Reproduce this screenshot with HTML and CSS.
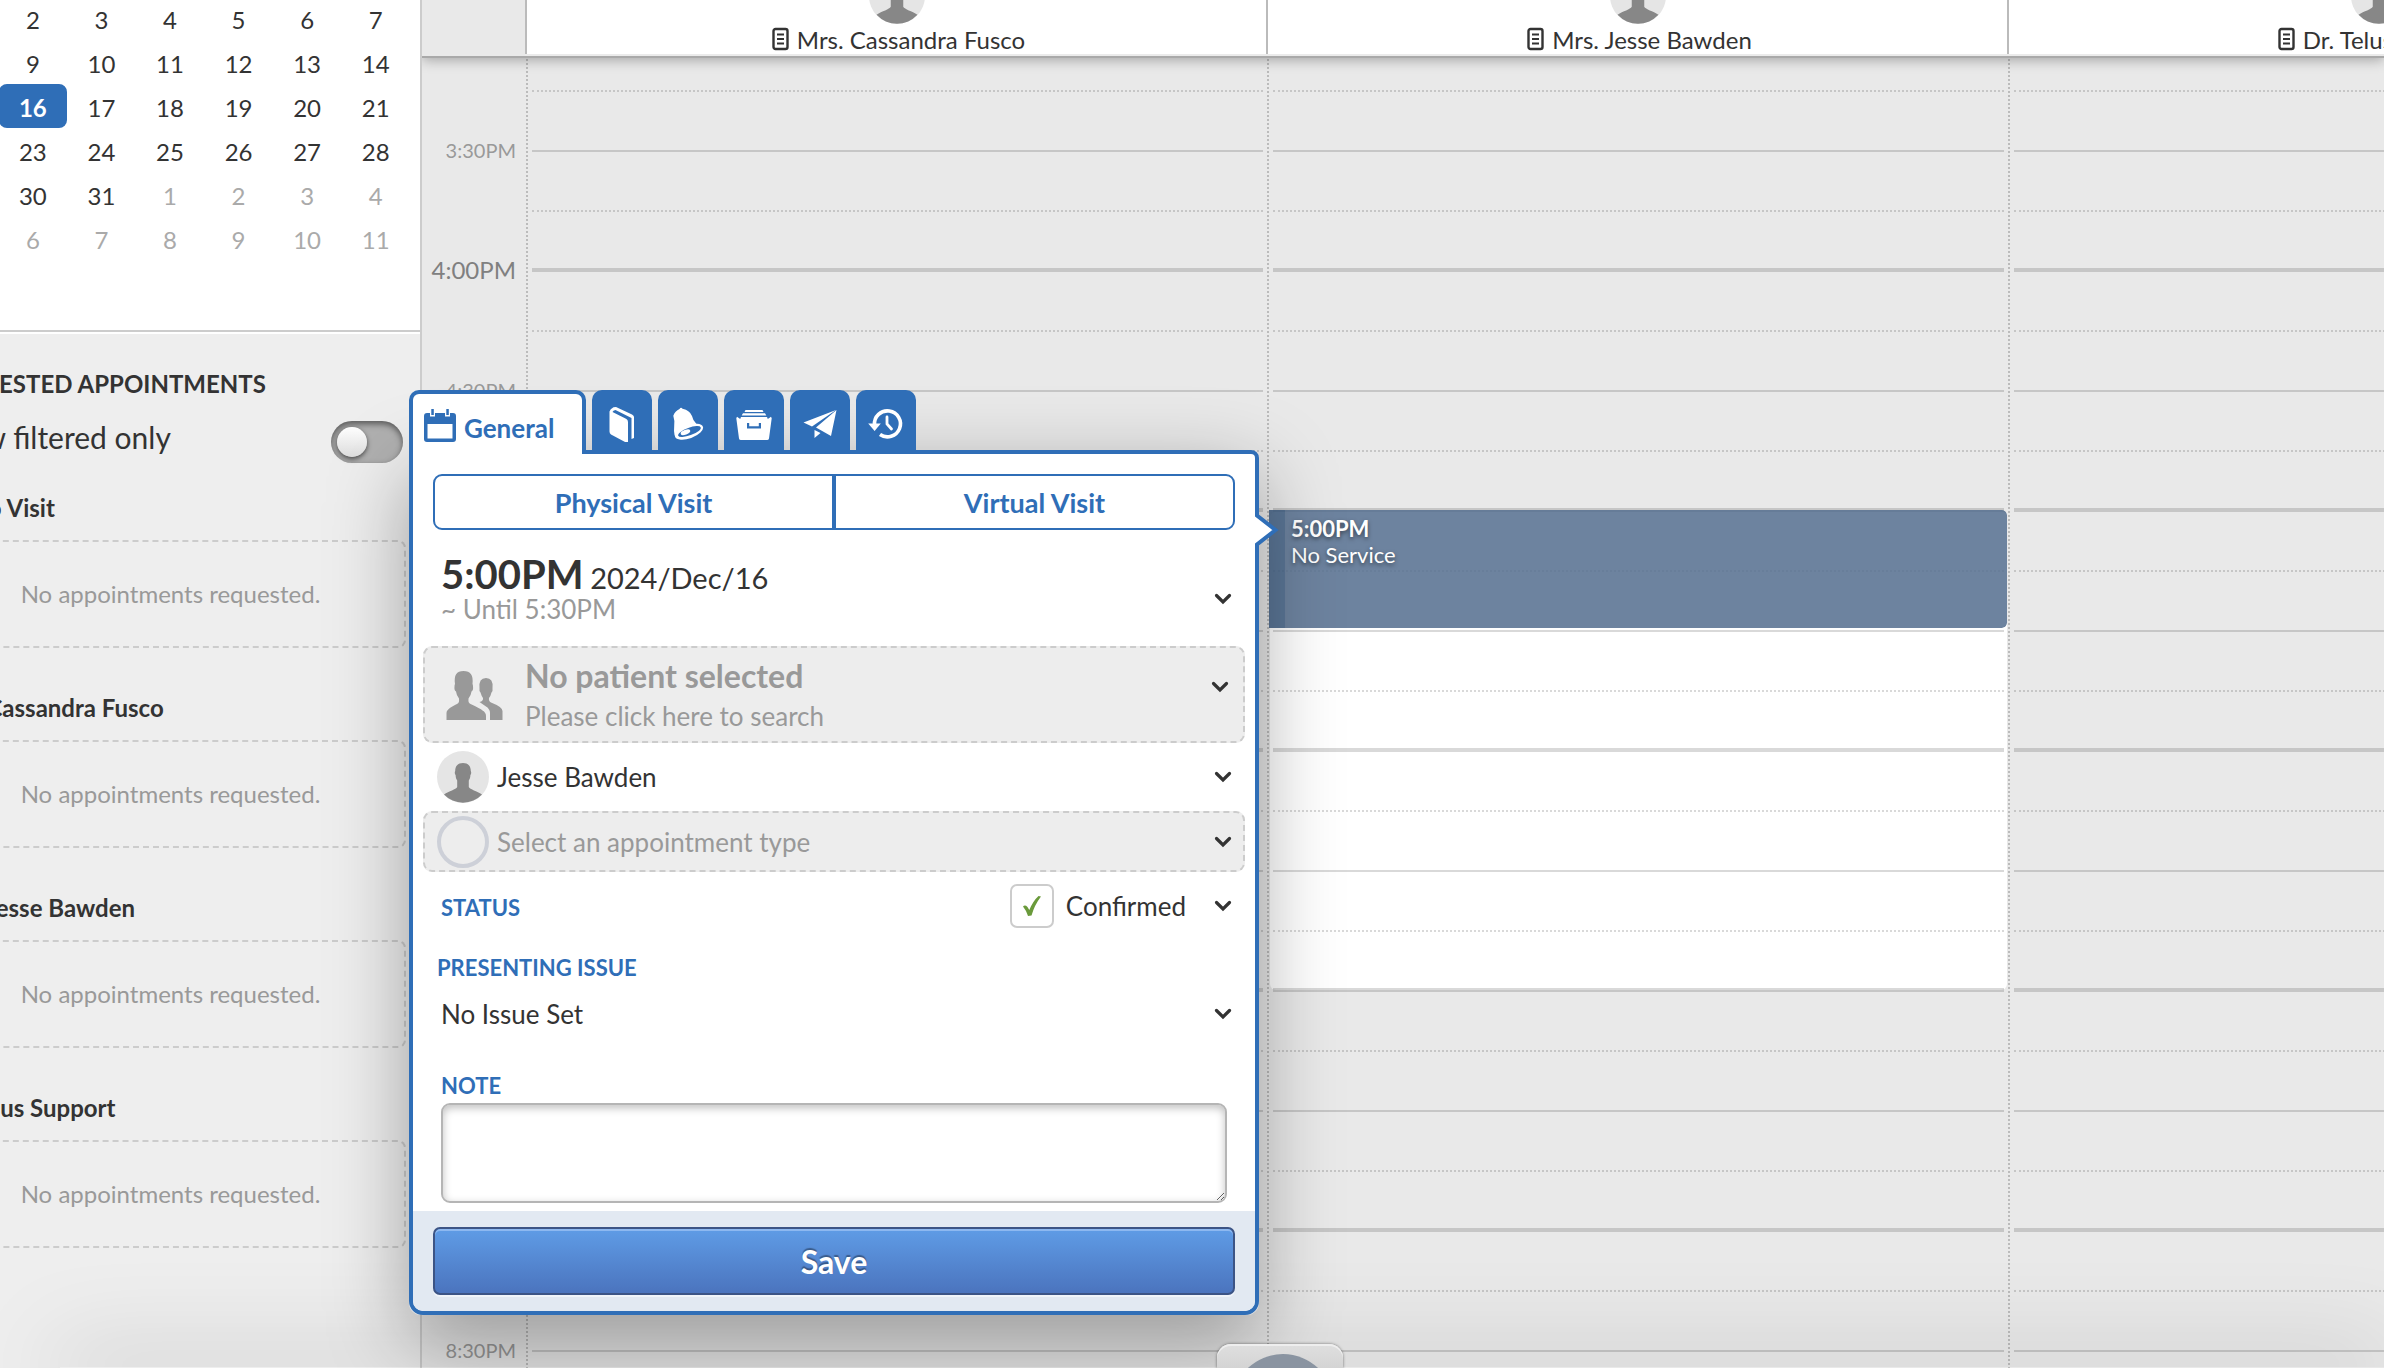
FILE: index.html
```html
<!DOCTYPE html>
<html lang="en">
<head>
<meta charset="utf-8">
<title>Schedule</title>
<link rel="stylesheet" href="styles.css">
</head>
<body>
<svg class="defs" aria-hidden="true">
  <symbol id="avatar" viewBox="0 0 52 52"><circle cx="26" cy="26" r="26" fill="#e5e5e5"/><path d="M7 43.500c5-3.500 12-5 13.200-7.500v-6.500c-1-1.500-1.500-3-1.600-5.500-1-1-1-3-.4-4 0-5 2.500-8 7.800-8s7.800 3 7.800 8c.6 1 .6 3-.4 4-.1 2.500-.6 4-1.600 5.500v6.500c1.200 2.500 8.200 4 13.200 7.500a26 26 0 0 1-38 0z" fill="#878787"/></symbol>
  <symbol id="doc" viewBox="0 0 18 26"><rect x="1.500" y="2" width="14" height="20" rx="2" fill="none" stroke="#333" stroke-width="2.400"/><path d="M5 7.500h7M5 12h7M5 16.500h7" stroke="#333" stroke-width="2"/></symbol>
  <symbol id="chev" viewBox="0 0 18 12"><path d="M2.500 2.500l6.500 6.500 6.500-6.500" fill="none" stroke="#333" stroke-width="3.200" stroke-linecap="round"/></symbol>
</svg>
<div class="app">
  <aside class="sidebar">
    <table class="month">
      <tbody>
        <tr><td>1</td><td>2</td><td>3</td><td>4</td><td>5</td><td>6</td><td>7</td></tr>
        <tr><td>8</td><td>9</td><td>10</td><td>11</td><td>12</td><td>13</td><td>14</td></tr>
        <tr><td>15</td><td class="today">16</td><td>17</td><td>18</td><td>19</td><td>20</td><td>21</td></tr>
        <tr><td>22</td><td>23</td><td>24</td><td>25</td><td>26</td><td>27</td><td>28</td></tr>
        <tr><td>29</td><td>30</td><td>31</td><td class="out">1</td><td class="out">2</td><td class="out">3</td><td class="out">4</td></tr>
        <tr><td class="out">5</td><td class="out">6</td><td class="out">7</td><td class="out">8</td><td class="out">9</td><td class="out">10</td><td class="out">11</td></tr>
      </tbody>
    </table>
    <section class="requests">
      <h2>REQUESTED APPOINTMENTS</h2>
      <label class="filter"><span>Show filtered only</span><input type="checkbox" class="toggle"></label>
      <h3>Studio Visit</h3>
      <p>No appointments requested.</p>
      <h3>Mrs. Cassandra Fusco</h3>
      <p>No appointments requested.</p>
      <h3>Mrs. Jesse Bawden</h3>
      <p>No appointments requested.</p>
      <h3>Dr. Telus Support</h3>
      <p>No appointments requested.</p>
    </section>
  </aside>

  <main class="schedule">
    <header class="people">
      <div class="corner"></div>
      <div class="person"><svg class="face"><use href="#avatar"/></svg><span><svg class="doc"><use href="#doc"/></svg>Mrs. Cassandra Fusco</span></div>
      <div class="person"><svg class="face"><use href="#avatar"/></svg><span><svg class="doc"><use href="#doc"/></svg>Mrs. Jesse Bawden</span></div>
      <div class="person"><svg class="face"><use href="#avatar"/></svg><span><svg class="doc"><use href="#doc"/></svg>Dr. Telus Support</span></div>
    </header>
    <div class="grid">
      <div class="times">
        <time>3:30PM</time><time class="hour">4:00PM</time><time>4:30PM</time><time class="hour">5:00PM</time><time>5:30PM</time><time class="hour">6:00PM</time><time>6:30PM</time><time class="hour">7:00PM</time><time>7:30PM</time><time class="hour">8:00PM</time><time>8:30PM</time>
      </div>
      <div class="lane">
        <i></i><i></i><i></i><i></i><i></i><i></i><i></i><i></i><i></i><i></i><i></i><i></i><i></i><i></i><i></i><i></i><i></i><i></i><i></i><i></i><i></i><i></i><i></i>
      </div>
      <div class="lane">
        <div class="open"></div>
        <i></i><i></i><i></i><i></i><i></i><i></i><i></i><i></i><i></i><i></i><i></i><i></i><i></i><i></i><i></i><i></i><i></i><i></i><i></i><i></i><i></i><i></i><i></i>
        <div class="booking"><b>5:00PM</b><span>No Service</span></div>
      </div>
      <div class="lane">
        <i></i><i></i><i></i><i></i><i></i><i></i><i></i><i></i><i></i><i></i><i></i><i></i><i></i><i></i><i></i><i></i><i></i><i></i><i></i><i></i><i></i><i></i><i></i>
      </div>
    </div>
  </main>
</div>
<div class="bottom-shade"></div>

<form class="popup">
  <nav class="tabs">
    <button type="button" class="tab active">
      <svg width="32" height="34" viewBox="0 0 32 34"><path fill="#2f6eb7" fill-rule="evenodd" d="M3 4h3v3.500h5V4h10v3.500h5V4h3a3 3 0 0 1 3 3v23a3 3 0 0 1-3 3H3a3 3 0 0 1-3-3V7a3 3 0 0 1 3-3zM3.500 15v14.500h25V15z"/><path fill="#2f6eb7" d="M7.300 0h2.500v6H7.300zM22.300 0h2.500v6h-2.500z"/></svg>General
    </button>
    <button type="button" class="tab" aria-label="Chart"><svg width="36" height="36" viewBox="0 0 36 36"><path fill="#fff" fill-rule="evenodd" d="M5.500 5.500Q6 3 9.500 1.200L12 1 28 8.500Q30 9.500 30 11v21l-2.500 1V12L11.500 4Q9 4.500 8.500 6l13.500 6.700Q24 13.700 24 16v20l-2 .5L7 28.500q-1.500-.8-1.500-3z"/></svg></button>
    <button type="button" class="tab" aria-label="Reminders"><svg width="36" height="36" viewBox="0 0 36 36"><path fill="#fff" d="M9.500 3Q11 .8 12.500 2.800 20 4.500 22 10 22.800 14.500 26.500 18L28 20 10 28 4.600 29.500 Q3.600 26 4.200 20 5 15 3.300 9.700 5 5 9.500 3z"/><g transform="rotate(-20 19 25.700)"><ellipse cx="19" cy="25.700" rx="14.800" ry="6.600" fill="#fff"/><ellipse cx="19.500" cy="25.700" rx="12" ry="3.800" fill="#2f6eb7"/><ellipse cx="15.500" cy="25" rx="5" ry="2.300" fill="#fff"/></g></svg></button>
    <button type="button" class="tab" aria-label="Files"><svg width="36" height="36" viewBox="0 0 36 36"><path fill="#fff" fill-rule="evenodd" d="M9.500 4h17l1 2h-19zM7 7.200h22l1.300 2.400H5.700zM5 11h26l.8 2L35 10.700l.7 1.600L33 32.500q-.3 1.500-2 1.500H5q-1.700 0-2-1.500L.3 12.300l.7-1.600L4.200 13zM11 17v5.500h14V17h-2.200v3.200h-9.600V17z"/></svg></button>
    <button type="button" class="tab" aria-label="Send"><svg width="36" height="36" viewBox="0 0 36 36"><path fill="#fff" d="M1.500 16.500L34 4 10 20.500zM34.500 4L14 21.500 29 30zM12.500 24v8l6-5z"/></svg></button>
    <button type="button" class="tab" aria-label="History"><svg width="36" height="36" viewBox="0 0 36 36"><path fill="none" stroke="#fff" stroke-width="3.600" d="M6.500 19A13 13 0 1 1 12 28.500"/><path fill="#fff" d="M.2 17.500h12.600l-6.200 7.500z"/><path fill="none" stroke="#fff" stroke-width="2.800" stroke-linecap="round" d="M19 11V18l4.500 5"/></svg></button>
  </nav>
  <div class="card">
    <div class="fields">
      <div class="visit"><button type="button">Physical Visit</button><button type="button">Virtual Visit</button></div>
      <button type="button" class="row when"><span class="grow"><b>5:00PM</b> <span class="date">2024/Dec/16</span><br><small>~ Until 5:30PM</small></span><svg class="chev"><use href="#chev"/></svg></button>
      <button type="button" class="row empty patient">
        <svg class="group" viewBox="0 0 57 50"><path fill="#999" d="M.500 49V42C.500 38 7 35 11 33q2.500-1 2-5.500-2.500-3-3-7-2-1-1.500-5 0-2 .5-2.500Q7 0 17.500 0T26.500 13q.5.500.5 2.500.5 4-1.500 5-.5 4-3 7-.5 4.500 2 5.500 10 4.500 12 6.500 3.500 2 3.500 5.500V49z"/><path fill="#999" d="M44 49V42q0-4-4-6.500L33.500 31q4-1 3.500-4-1.500-2-2.500-5.500-1.500-1-1-4.500Q32.500 7 40 7t6.500 10q.5 3.500-1 4.500-1 4-2.500 5.500-.5 3 2 4.500Q56.500 36 56.500 40V49z"/></svg>
        <span class="grow"><strong>No patient selected</strong><br>Please click here to search</span><svg class="chev"><use href="#chev"/></svg>
      </button>
      <button type="button" class="row provider"><svg class="face"><use href="#avatar"/></svg><span class="grow">Jesse Bawden</span><svg class="chev"><use href="#chev"/></svg></button>
      <button type="button" class="row empty kind"><span class="ring"></span><span class="grow">Select an appointment type</span><svg class="chev"><use href="#chev"/></svg></button>
      <div class="status"><h4>STATUS</h4><button type="button" class="row confirmed"><span class="tick"><svg width="20" height="22" viewBox="0 0 20 22"><path d="M1 11.500q2-2 4.500.5l1.800 3Q11 6 16.500 1l2.500.5Q12.500 10 9.500 20.500l-3.500.5Q4 15 1 11.500z" fill="#6a9a3b"/></svg></span><span>Confirmed</span><svg class="chev"><use href="#chev"/></svg></button></div>
      <h4 class="issue-title">PRESENTING ISSUE</h4>
      <button type="button" class="row issue"><span class="grow">No Issue Set</span><svg class="chev"><use href="#chev"/></svg></button>
      <label class="note" for="note">NOTE</label>
      <textarea id="note"></textarea>
    </div>
    <footer><button type="submit" class="save">Save</button></footer>
    <svg class="pointer" width="24" height="34" viewBox="0 0 24 34"><path d="M0 1h4v2L20.500 17 4 31v2H0z" fill="#fff"/><path d="M2 0v2.500L20.500 17 2 31.500V34" fill="none" stroke="#2f6eb7" stroke-width="4"/></svg>
  </div>
</form>
<div class="dock"><span></span></div>
</body>
</html>
```
FILE: styles.css
```css
* { box-sizing: border-box; }
body {
  margin: 0;
  height: 100vh;
  overflow: hidden;
  position: relative;
  font-family: Lato, "Liberation Sans", sans-serif;
  font-size: 26px;
  color: #333;
  background: #e9e9e9;
}
button { font: inherit; color: inherit; border: 0; background: none; padding: 0; margin: 0; text-align: left; }
h2, h3, h4, p { margin: 0; }
.defs { position: absolute; width: 0; height: 0; }
.app { display: flex; height: 100%; overflow: hidden; }

/* Sidebar, scrolled a little to the left */
.sidebar {
  flex: 0 0 492px;
  margin-left: -70px;
  border-right: 2px solid #ccc;
  background: #eee;
}
.month {
  width: 100%;
  height: 338px;
  display: block;
  border-collapse: collapse;
  background: #fff;
  border-bottom: 2px solid #fff;
  box-shadow: inset 0 -2px #ccc;
  font-size: 24px;
  line-height: 40px;
}
.month tbody { display: grid; grid-auto-rows: 44px; width: 480px; margin-top: -4px; }
.month tr { display: grid; grid-template-columns: repeat(7, 1fr); }
.month td { padding: 4px 0 0; text-align: center; border-radius: 8px; }
.month .today { background: #2f6eb7; color: #fff; font-weight: 700; }
.month .out { color: #aaa; }
.requests { padding: 34px 14px 0 5px; }
.requests h2, .requests h3 { font-size: 24px; line-height: 32px; margin-left: -2px; }
.filter { display: flex; justify-content: space-between; align-items: flex-start; font-size: 30px; line-height: 32px; height: 42px; margin: 21px 0 0 -2px; padding-right: 3px; }
.toggle {
  appearance: none;
  margin: 0;
  width: 72px;
  height: 42px;
  padding: 6px;
  border-radius: 21px;
  background: #b0b0b0;
  box-shadow: inset 0 3px 6px rgba(0,0,0,.5);
}
.toggle::before {
  content: "";
  display: block;
  width: 30px;
  height: 30px;
  border-radius: 50%;
  background: linear-gradient(#fff, #ddd);
  box-shadow: 0 2px 5px rgba(0,0,0,.6);
}
.filter + h3 { margin-top: 29px; }
.requests p + h3 { margin-top: 44px; }
.requests p {
  margin-top: 16px;
  height: 108px;
  line-height: 104px;
  border: 2px dashed #ccc;
  border-radius: 8px;
  text-align: center;
  font-size: 24px;
  color: #999;
}

/* Schedule */
.schedule { flex: 1; min-width: 0; overflow: hidden; }
.people {
  display: flex;
  height: 58px;
  position: relative;
  z-index: 1;
  border-bottom: 2px solid #a9a9a9;
  box-shadow: 0 2px 12px rgba(0,0,0,.3);
  background: #ebebeb;
}
.corner { flex: 0 0 103px; background: #e9e9e9; }
.person {
  flex: 0 0 741px;
  height: 54px;
  border-left: 2px solid #bbb;
  background: #fff;
  display: flex;
  flex-direction: column;
  justify-content: flex-end;
  align-items: center;
  font-size: 24px;
  line-height: 28px;
}
.person span { display: flex; align-items: center; gap: 7px; padding-left: 4px; }
.face { width: 52px; height: 52px; flex: none; }
.person .face { width: 56px; height: 56px; margin-bottom: 2px; }
.doc { width: 18px; height: 26px; }
.grid { display: flex; margin-top: -26px; }
.times { flex: 0 0 104px; padding: 88px 10px 0 0; display: flex; flex-direction: column; }
.times time { height: 120px; line-height: 60px; font-size: 20px; text-align: right; color: #999; }
.times .hour { font-size: 24px; color: #808080; }
.lane { flex: 0 0 741px; position: relative; padding: 0 4px; border-left: 2px dotted #bbb; }
.lane i { display: block; height: 60px; border-bottom: 2px dotted rgba(0,0,0,.15); position: relative; }
.lane i:nth-of-type(2n) { border-bottom-style: solid; }
.lane i:nth-of-type(4n) { border-bottom-width: 4px; }
.open { position: absolute; left: 1px; right: 1px; top: 480px; height: 478px; background: #fff; border-radius: 6px; }
.booking {
  position: absolute;
  left: 0;
  right: 1px;
  top: 478px;
  height: 118px;
  padding: 6px;
  border-left: 16px solid rgba(67,98,134,.88);
  border-radius: 0 5px 5px 0;
  background: rgba(87,112,145,.87);
  background-clip: padding-box;
  color: #fff;
  font-size: 22px;
  line-height: 26px;
  text-shadow: 0 2px 4px rgba(0,0,0,.5);
  display: flex;
  flex-direction: column;
}
.bottom-shade { position: absolute; left: 60px; right: 0; bottom: 0; height: 1px; box-shadow: 0 0 90px 6px rgba(0,0,0,.42); }

/* Appointment popup */
.popup { position: absolute; left: 409px; top: 390px; width: 850px; }
.popup::before {
  content: "";
  position: absolute;
  inset: 60px 0 0;
  border-radius: 12px;
  box-shadow: 0 24px 80px rgba(0,0,0,.34);
}
.tabs { display: flex; gap: 6px; position: relative; z-index: 1; height: 64px; }
.tab {
  width: 60px;
  height: 62px;
  border-radius: 10px 10px 0 0;
  background: #2f6eb7;
  display: flex;
  align-items: center;
  justify-content: center;
  padding-top: 5px;
}
.tab.active {
  width: 177px;
  height: 64px;
  border: 4px solid #2f6eb7;
  border-bottom: 0;
  background: #fff;
  color: #2f6eb7;
  font-weight: 700;
  gap: 8px;
  justify-content: flex-start;
  padding: 8px 0 0 11px;
}
.tab.active svg { margin-top: -5px; }
.card { position: relative; margin-top: -4px; border: 4px solid #2f6eb7; border-radius: 0 8px 14px 14px; background: #fff; }
.fields { padding: 20px 20px 8px; display: flex; flex-direction: column; }
.visit { display: flex; height: 56px; border: 2px solid #2f6eb7; border-radius: 9px; color: #2f6eb7; font-size: 27px; font-weight: 700; }
.visit button { flex: 1; text-align: center; }
.visit button + button { border-left: 4px solid #2f6eb7; }
.row { display: flex; align-items: center; }
.grow { flex: 1; }
.chev { width: 18px; height: 12px; flex: none; }
.when, .status, .issue, .note { margin: 0 3px 0 8px; }
.when { height: 116px; line-height: 30px; padding-top: 6px; }
.when b { font-size: 40px; }
.when .date { font-size: 29px; }
.when small { font-size: 26px; color: #999; }
.when .chev { margin-top: 16px; }
.empty { border: 2px dashed #ccc; border-radius: 9px; background: #ededed; color: #999; margin: 0 -10px; }
.patient { height: 97px; padding: 2px 14px 0 21px; line-height: 38px; }
.patient .group { width: 57px; height: 50px; margin-right: 22px; }
.patient strong { font-size: 32px; }
.patient .chev { margin-top: -18px; }
.provider { height: 68px; margin: 0 3px 0 4px; gap: 8px; }
.kind { height: 61px; padding: 0 11px 0 12px; gap: 8px; }
.ring { width: 52px; height: 52px; border: 4px solid #cdd0d8; border-radius: 50%; }
h4, .note { font-size: 22px; font-weight: 700; line-height: 28px; color: #2f6eb7; }
.status { display: flex; justify-content: space-between; align-items: center; height: 68px; }
.status h4 { padding-top: 3px; }
.confirmed { gap: 12px; }
.confirmed .chev { margin-left: 16px; }
.tick { width: 44px; height: 44px; border: 2px solid #ccc; border-radius: 7px; display: grid; place-items: center; }
.issue-title { margin: 14px 4px 0; }
.issue { height: 64px; }
.note { margin-top: 26px; }
textarea {
  height: 100px;
  margin: 3px 8px 0;
  border: 2px solid #b5b5b5;
  border-radius: 9px;
  background: #fff;
  box-shadow: inset 0 3px 8px rgba(0,0,0,.25);
  font: inherit;
  outline: 0;
}
footer { padding: 16px 20px; background: #e2e9f2; border-radius: 0 0 10px 10px; }
.save {
  width: 100%;
  height: 68px;
  border: 2px solid #3c5485;
  border-radius: 7px;
  background: linear-gradient(#5f9ce6, #4b74be);
  box-shadow: inset 0 2px #8db8f0, 0 2px #f0f4fa;
  color: #fff;
  font-size: 32px;
  font-weight: 700;
  text-align: center;
  text-shadow: 0 -2px 1px rgba(0,0,0,.35);
}
.pointer { position: absolute; right: -24px; top: 59px; }

.dock {
  position: absolute;
  left: 1217px;
  bottom: 0;
  width: 126px;
  height: 24px;
  overflow: hidden;
  padding: 10px 9px 0 15px;
  border-radius: 14px 14px 0 0;
  background: linear-gradient(#dfdfdf, #d4d4d4);
  box-shadow: 0 0 3px rgba(0,0,0,.5), inset 0 2px #eee;
}
.dock span { display: block; width: 102px; height: 102px; border-radius: 50%; background: #8a94a1; }
```
